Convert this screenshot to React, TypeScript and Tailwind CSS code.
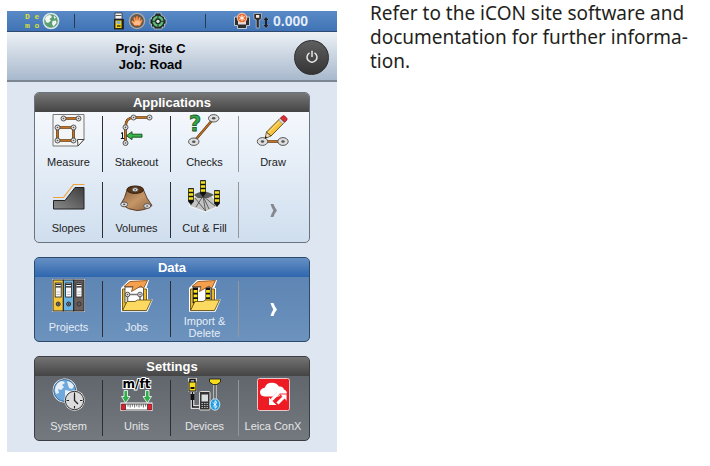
import type { ReactNode } from 'react';
import clsx from 'clsx';

/* Small parts shared by the icons */

function Node({ x, y, rx = 2.5, ry = 2.5 }: { x: number; y: number; rx?: number; ry?: number }) {
    return (
        <g>
            <ellipse cx={x} cy={y} rx={rx} ry={ry} fill="#dedede" stroke="#4a4a4a" strokeWidth="0.9" />
            <ellipse cx={x} cy={y} rx={rx / 3} ry={ry / 3} fill="#555" />
        </g>
    );
}

function Rod({ d }: { d: string }) {
    return (
        <g fill="none">
            <path d={d} stroke="#4a2c10" strokeWidth="2.600" />
            <path d={d} stroke="#c8731c" strokeWidth="1.300" />
        </g>
    );
}

function Pole({ x, y }: { x: number; y: number }) {
    return (
        <g>
            <path d={`M${x} ${y}h5v13l-2.5 3l-2.5-3z`} fill="#111" stroke="#111" strokeWidth="0.8" />
            <path d={`M${x + 0.3} ${y + 2}h4.4M${x + 0.3} ${y + 6}h4.4M${x + 0.3} ${y + 10}h4.4`} stroke="#f7e21b" strokeWidth="2.700" />
        </g>
    );
}

function Icon({ children }: { children: ReactNode }) {
    return (
        <svg viewBox="0 0 33 33" className="h-[33px] w-[33px] overflow-visible" aria-hidden="true">
            {children}
        </svg>
    );
}

const MeasureIcon = () => (
    <Icon>
        <path d="M1 .5h31v25l-6 6.500H1z" fill="#f4f5f6" stroke="#777" />
        <path d="M26 32l-.5-6.500l6.500 0z" fill="#fff" stroke="#444" />
        <Rod d="M11.500 4.500H26.500" />
        <Rod d="M5.500 13.500H21.500V26.500H5.500z" />
        <Node x={11.5} y={4.5} /><Node x={26.5} y={4.5} />
        <Node x={5.5} y={13.5} /><Node x={21.5} y={13.5} />
        <Node x={5.5} y={26.5} /><Node x={21.5} y={26.5} />
    </Icon>
);

const StakeoutIcon = () => (
    <Icon>
        <Rod d="M29.500 3.500H14C8 3.500 5.500 7 5.500 13V29" />
        <Node x={29.5} y={3.5} /><Node x={13.5} y={3.5} /><Node x={5.5} y={13.3} /><Node x={5.5} y={29} />
        <path d="M1 19.500l1.500-1v6M.8 24.500h3.200" fill="none" stroke="#111" />
        <path d="M6.500 21.700l5.500-4v2.500h10v3H12v2.500z" fill="#39b54a" stroke="#124a1a" strokeWidth="0.9" />
    </Icon>
);

const ChecksIcon = () => (
    <Icon>
        <Rod d="M25.700 4.500L6 27.500" />
        <Node x={25.7} y={4.3} rx={5.2} ry={3.7} />
        <Node x={5.8} y={27.7} rx={5.2} ry={3.7} />
        <text x="1" y="17" className="font-['DejaVu_Sans'] text-[21px] font-bold" fill="#35a84a" stroke="#145422" strokeWidth="0.8">?</text>
    </Icon>
);

const DrawIcon = () => (
    <Icon>
        <Rod d="M5 27.500H26" />
        <Node x={5.5} y={27.5} rx={5.2} ry={3.9} />
        <Node x={26} y={27.5} rx={5.2} ry={3.9} />
        <path d="M8 24.500l1.500-6.500l4.500 4z" fill="#f2dcb5" stroke="#5b4315" strokeWidth="0.8" />
        <path d="M9.500 18L23 4.500l4.300 4L14 22z" fill="#f6c33c" stroke="#5b4315" strokeWidth="0.9" />
        <path d="M11 19L24.300 5.800" stroke="#fbe395" />
        <path d="M21.500 6l1.600-1.600l4.300 4l-1.600 1.600z" fill="#ddd" stroke="#777" strokeWidth="0.6" />
        <path d="M23.500 4l2-2q1-1 2.200 0l2 2q1 1 0 2.200l-2 2z" fill="#e02b35" stroke="#7a1218" strokeWidth="0.7" />
        <path d="M8 24.500l.5-2.500l1.700 1.700z" fill="#111" />
    </Icon>
);

const SlopesIcon = () => (
    <Icon>
        <defs>
            <linearGradient id="slope" x1="0" y1="1" x2="1" y2="0">
                <stop offset="0" stopColor="#8a8a8a" />
                <stop offset="1" stopColor="#3e3e3e" />
            </linearGradient>
        </defs>
        <path d="M1.500 20.500H13L23 7.500H32V29H1.500z" fill="url(#slope)" stroke="#222" />
        <path d="M1 17.500H11.500L21.500 4.500H32.500" fill="none" stroke="#f2a23c" strokeWidth="1.200" />
    </Icon>
);

const VolumesIcon = () => (
    <Icon>
        <defs>
            <linearGradient id="heap" x1="0" y1="0" x2="1" y2="1">
                <stop offset="0" stopColor="#8a5d3a" />
                <stop offset="0.5" stopColor="#c59667" />
                <stop offset="1" stopColor="#8f6440" />
            </linearGradient>
        </defs>
        <path d="M7 10Q5 18 1 24Q8 30 17 30.500Q27 30 32 25.500Q26 18 23.500 10z" fill="url(#heap)" stroke="#4f3218" strokeWidth="0.9" />
        <ellipse cx="15.200" cy="9.700" rx="8.300" ry="3.700" fill="#5a3416" stroke="#33200f" />
        <Node x={15.2} y={9.7} rx={3} ry={2.1} />
        <Node x={4.2} y={24.4} rx={3.5} ry={2.4} />
        <Node x={27.2} y={26} rx={3.5} ry={2.4} />
    </Icon>
);

const CutFillIcon = () => (
    <Icon>
        <path d="M1 26L7 16L13 12H18L24 16L31 26L17.500 32z" fill="#c4c4c4" stroke="#fff" strokeWidth="0.8" />
        <path d="M6 15Q15 8 26 15L20 18H10z" fill="#5b5b5b" />
        <path d="M7 18L17.500 31L15 16L27 26M8 27L15 16L21 29" fill="none" stroke="#444" strokeWidth="0.8" />
        <Pole x={0.5} y={8.5} />
        <Pole x={12.5} y={0.5} />
        <Pole x={26.5} y={10.5} />
    </Icon>
);

const binders = ['#f3c83c', '#6cb4e4', '#6a5f5c'];

const ProjectsIcon = () => (
    <Icon>
        <rect x="0" y="0" width="33" height="33" fill="#e8e8e8" />
        {binders.map((color, i) => (
            <g key={color} transform={`translate(${1 + i * 10.4} 1)`}>
                <rect width="10.200" height="31" fill={color} stroke="#222" strokeWidth="0.9" />
                <rect x="2.200" y="3" width="6" height="14" fill="#f8f8f8" stroke="#222" strokeWidth="0.8" />
                <path d="M2.600 4.300h5.200M2.600 6.800h5.200" stroke="#222" strokeWidth="1.200" />
                <path d="M3.400 12h3.600M3.400 14.500h3.600" stroke="#aaa" strokeWidth="0.7" />
                <circle cx="5.200" cy="24" r="2" fill="#888" stroke="#222" strokeWidth="0.9" />
                <circle cx="5.200" cy="24" r="0.700" fill="#111" />
            </g>
        ))}
    </Icon>
);

function FolderIcon({ children }: { children: ReactNode }) {
    return (
        <Icon>
            <path d="M1 9L9 1H29L26.500 9H28V20.500H32.800L27.500 32.800H1z" fill="#fff" />
            <path d="M2.500 10H26.500V31H2.500z" fill="#e9b92b" stroke="#5c4308" strokeWidth="0.8" />
            <path d="M5 8H23.500V24H5z" fill="#fff" stroke="#333" strokeWidth="0.8" />
            {children}
            <path d="M4 7.500L10 2.500L27.500 1.500L23.500 9.500L21 7L11.500 12.500L13 7.500z" fill="#f5a04f" stroke="#7b4616" strokeWidth="0.8" />
            <path d="M2.500 31.500L7 22.500H15L17.500 21H31.500L26.500 31.500z" fill="#fcd960" stroke="#5c4308" strokeWidth="0.8" />
        </Icon>
    );
}

const JobsIcon = () => (
    <FolderIcon>
        <path d="M7.500 22V15.500H20V22" fill="none" stroke="#777" strokeWidth="1.600" />
        <Node x={7.5} y={15.5} rx={2.3} ry={2.3} />
        <Node x={20} y={15.5} rx={2.3} ry={2.3} />
    </FolderIcon>
);

const ImportIcon = () => (
    <FolderIcon>
        <path d="M7.500 8.500V24M20 8.500V24" stroke="#111" strokeWidth="5" />
        <path d="M7.500 11V24M20 11V24" stroke="#f7e21b" strokeWidth="3.800" strokeDasharray="2.800 1.700" />
    </FolderIcon>
);

const continents = 'M4 8Q6 3 11 3L13 5L10 7L12 9L9 12L6 11L7 15L4 16Q2 12 4 8zM15 3Q20 4 22 8L20 11L17 10L16 7zM13 12L18 13L19 17L15 21L13 17z';

const SystemIcon = () => (
    <Icon>
        <circle cx="12.700" cy="12.500" r="12" fill="#fff" />
        <circle cx="12.700" cy="12.500" r="11" fill="#6fa8dc" stroke="#2f5d8c" strokeWidth="0.9" />
        <path d={continents} fill="#e6f0f8" />
        <circle cx="22.500" cy="22.500" r="10.200" fill="#f7f7f7" />
        <circle cx="22.500" cy="22.500" r="9.200" fill="#dcdcdc" stroke="#333" />
        <path d="M22.500 14.500v2.500M22.500 28v2.500M14.500 22.500h2.500M28 22.500h2.500" stroke="#222" strokeWidth="1.100" />
        <path d="M22.500 17V22.500L26 26" fill="none" stroke="#222" strokeWidth="1.300" />
    </Icon>
);

const UnitsIcon = () => (
    <Icon>
        <text x="16.500" y="10" textAnchor="middle" className="font-['DejaVu_Sans'] text-[12px] font-bold" fill="#000" stroke="#fff" strokeWidth="2" paintOrder="stroke">m/ft</text>
        <rect x="0.500" y="24.500" width="32" height="8.500" fill="#fff" />
        <path d="M1.500 26H5.500v6H1.500zM27.500 26h4v6h-4z" fill="#e01f2d" stroke="#6d0d14" strokeWidth="0.7" />
        <path d="M5.500 26H27.500V32H5.500z" fill="#fff" stroke="#333" strokeWidth="0.8" />
        <path d="M8 26v2.500M10.200 26v3.500M12.400 26v2.500M14.600 26v3.500M16.800 26v2.500M19 26v3.500M21.200 26v2.500M23.400 26v3.500M25.600 26v2.500" stroke="#333" strokeWidth="0.7" />
        <path d="M4 12.500h3.500v6H10L5.700 25L1.500 18.500H4zM25.500 12.500H29v6h2.500L27.300 25L23 18.500h2.500z" fill="#2fae49" stroke="#fff" strokeWidth="0.8" />
    </Icon>
);

const DevicesIcon = () => (
    <Icon>
        <path d="M4.500 14V29H12" fill="none" stroke="#fff" strokeWidth="3.500" />
        <path d="M4.500 14V29H12" fill="none" stroke="#111" strokeWidth="1.500" />
        <rect x="2.500" y="16" width="4" height="6" fill="#111" />
        <path d="M0 0H9V14H0z" fill="#fff" opacity="0.7" />
        <path d="M2 5V1.500h5V5" fill="none" stroke="#111" strokeWidth="1.500" />
        <rect x="1" y="4" width="7" height="9" fill="#f7dc1b" stroke="#111" />
        <path d="M2.500 9h4v2h-4z" fill="#111" />
        <path d="M27 6V24" stroke="#fff" strokeWidth="3" />
        <path d="M27 6V24" stroke="#333" strokeWidth="1.400" />
        <path d="M21.500 1H32.500V4L29 6.500H25L21.500 4z" fill="#f7dc1b" stroke="#111" strokeWidth="0.8" />
        <rect x="11.500" y="13.500" width="10.500" height="18.500" rx="1" fill="#333" stroke="#ddd" />
        <rect x="13.500" y="16.500" width="6.500" height="7" fill="#d8dde0" />
        <path d="M13.500 25.500h6.500M13.500 27.500h6.500M13.500 29.500h6.500" stroke="#bbb" strokeWidth="0.9" strokeDasharray="1.500 1" />
        <ellipse cx="27" cy="26.500" rx="4.800" ry="5.700" fill="#1e9be0" stroke="#e6f5ff" strokeWidth="0.8" />
        <path d="M24.800 24.300l4.200 4.200L27 30.300V22.700l2 1.800l-4.200 4.200" fill="none" stroke="#fff" strokeWidth="0.9" />
    </Icon>
);

const ConXIcon = () => (
    <Icon>
        <rect x="0.500" y="0.500" width="32" height="32" rx="2" fill="#ed1c24" stroke="#e8c9ca" />
        <path d="M7.500 18.500Q3 18 3 14Q3.500 10.300 7.500 10Q9.500 4.500 15 4.700Q20 4.700 22 8.500Q26 8 27 11.500Q30.300 12.500 29.800 16Q29.300 18.300 26 18.500H9z" fill="#fff" />
        <path d="M14 21.500L20 15.500L22 17.500" fill="none" stroke="#ed1c24" strokeWidth="1.400" />
        <path d="M21.500 15L14.500 22" stroke="#fff" strokeWidth="3" />
        <path d="M12 19.500V27H19.500z" fill="#fff" />
        <path d="M22.500 16H30V23.500z" fill="#fff" stroke="#ed1c24" strokeWidth="0.900" />
        <path d="M27 19L20.500 25.500" stroke="#fff" strokeWidth="3" />
        <path d="M24 17.500L17 24.500" stroke="#ed1c24" strokeWidth="1.400" />
    </Icon>
);

/* Status bar icons */

const StatusGlobe = () => (
    <svg viewBox="0 0 18 18" className="h-[18px] w-[18px]" role="img" aria-label="Online">
        <circle cx="9" cy="9" r="7.600" fill="#5c9f72" stroke="#d9e4e8" strokeWidth="1.500" />
        <path d="M3 7Q4 3 8.500 3L10 5L7.500 7L9 8.500L6 11L4 10zM10.500 9L14 8.500L14.500 11L11.500 14.500L10 12zM11.500 3.500L14 5.500L12.500 7z" fill="#f2f7f3" />
    </svg>
);

const StatusTablet = () => (
    <svg viewBox="0 0 12 18" className="h-[18px] w-3" role="img" aria-label="Instrument">
        <path d="M1 7H11V17.500H1z" fill="#2a2a2a" />
        <rect x="2" y="1" width="7" height="6" fill="#f4f4f4" stroke="#333" strokeWidth="0.800" />
        <path d="M2.500 3.500h6" stroke="#555" />
        <rect x="2" y="8" width="7" height="8.500" fill="#f3d21c" stroke="#111" strokeWidth="0.800" />
        <rect x="3.800" y="9" width="3.500" height="3" fill="#7bb1dd" />
        <path d="M4 14h3.500" stroke="#111" strokeWidth="1.200" />
    </svg>
);

const StatusHand = () => (
    <svg viewBox="0 0 18 18" className="h-[18px] w-[18px]" role="img" aria-label="Manual mode">
        <circle cx="9" cy="9" r="7.600" fill="#625b55" stroke="#b4ada4" strokeWidth="1.300" />
        <path d="M6.500 13.500L3.500 9.500L4.500 8.700L6.300 10L5.700 5.500L6.800 5.200L8 8.500L8.300 4.500H9.600L9.900 8.500L11.300 5.200L12.400 5.700L11.800 9.300L13.500 7.800L14.300 8.500L12 13.500z" fill="#ffbd8b" stroke="#e66b19" strokeWidth="0.700" />
    </svg>
);

const StatusTarget = () => (
    <svg viewBox="0 0 18 18" className="h-[18px] w-[18px]" role="img" aria-label="Position">
        <path d="M6 1h6v2l3.500 2v2h1.500v5h-1.500v3H13v2H5v-2H2.500v-3H1V7h1.500V5L6 3z" fill="#202a25" stroke="#c8d6d6" strokeWidth="0.700" />
        <circle cx="9" cy="9.300" r="4.300" fill="none" stroke="#5fb877" strokeWidth="2.600" />
        <path d="M9 3V15.500M3 9.300H15" stroke="#20352a" />
        <circle cx="9" cy="9.300" r="1.600" fill="#e3f1e6" />
    </svg>
);

const StatusLaser = () => (
    <svg viewBox="0 0 16 18" className="h-[18px] w-4" role="img" aria-label="Laser off">
        <path d="M.5 5H15.500V13.500H12.500V16.500H3.500V13.500H.5z" fill="#2e2e2e" stroke="#cfd5dc" strokeWidth="0.900" />
        <path d="M4 8H12V12.500H4z" fill="#dedede" />
        <circle cx="8" cy="6" r="4.800" fill="#ee6b2d" stroke="#f6ddcf" strokeWidth="0.900" />
        <path d="M8 3v6M5.400 4.500l5.200 3M10.600 4.500l-5.200 3" stroke="#fff" />
    </svg>
);

const StatusPole = () => (
    <svg viewBox="0 0 17 18" className="h-[18px] w-[17px]" role="img" aria-label="Pole height">
        <path d="M.8 1.500H8.500V6.500L6.300 8V16H3.200V8L.8 6.500z" fill="#2e2e2e" stroke="#c3cbd4" strokeWidth="0.700" />
        <path d="M3 3h3.300v2.800H3z" fill="#f4e7df" />
        <path d="M13 4.500l3.300 4h-6.600zM13 16.500l3.300-4h-6.600z" fill="#1a222e" stroke="#c3cbd4" strokeWidth="0.400" />
        <path d="M13 8V13" stroke="#1a222e" strokeWidth="2" />
    </svg>
);

type Tone = 'light' | 'blue' | 'gray';

type Item = {
    label: string;
    icon?: ReactNode;
};

const applications: Item[] = [
    { label: 'Measure', icon: <MeasureIcon /> },
    { label: 'Stakeout', icon: <StakeoutIcon /> },
    { label: 'Checks', icon: <ChecksIcon /> },
    { label: 'Draw', icon: <DrawIcon /> },
    { label: 'Slopes', icon: <SlopesIcon /> },
    { label: 'Volumes', icon: <VolumesIcon /> },
    { label: 'Cut & Fill', icon: <CutFillIcon /> },
    { label: 'More applications' }
];

const data: Item[] = [
    { label: 'Projects', icon: <ProjectsIcon /> },
    { label: 'Jobs', icon: <JobsIcon /> },
    { label: 'Import & Delete', icon: <ImportIcon /> },
    { label: 'More data' }
];

const settings: Item[] = [
    { label: 'System', icon: <SystemIcon /> },
    { label: 'Units', icon: <UnitsIcon /> },
    { label: 'Devices', icon: <DevicesIcon /> },
    { label: 'Leica ConX', icon: <ConXIcon /> }
];

const panelTone: Record<Tone, string> = {
    light: 'border-[#6b747c] bg-linear-to-b from-[#fafcff] to-[#cfdeee] text-[#222]',
    blue: 'border-[#2c4a6c] bg-linear-to-b from-[#5a82b1] to-[#6c92bd] text-[#e4edf7]',
    gray: 'border-[#3a3d42] bg-linear-to-b from-[#5c6168] to-[#73797f] text-[#e6e6e6]'
};

const titleTone: Record<Tone, string> = {
    light: 'from-[#777] to-[#454545]',
    blue: 'from-[#6690c4] to-[#2e66ae]',
    gray: 'from-[#747474] to-[#444]'
};

function Panel({ title, tone, items }: { title: string; tone: Tone; items: Item[] }) {
    return (
        <section className={clsx('overflow-hidden rounded-[5px] border', panelTone[tone])}>
            <h2 className={clsx('bg-linear-to-b text-center text-[13px] leading-[19px] font-bold text-white', titleTone[tone])}>
                {title}
            </h2>
            <ul className="grid grid-cols-4 gap-y-0.5 pr-0.5">
                {items.map((item, idx) => (
                    <li key={item.label} className="flex h-16 items-center">
                        {item.icon ? (
                            <button className="flex h-full min-w-0 flex-1 flex-col items-center gap-[3px] pt-0.5 text-[11px] leading-3">
                                {item.icon}
                                <span className={clsx('flex h-6 items-center text-center', item.label.length > 12 ? 'w-12' : 'whitespace-nowrap')}>
                                    {item.label}
                                </span>
                            </button>
                        ) : (
                            <button aria-label={item.label} className={clsx('flex h-full flex-1 items-center justify-center', tone === 'light' ? 'text-[#85898e]' : 'text-white')}>
                                <svg viewBox="0 0 7 13" className="h-[13px] w-[7px]" aria-hidden="true">
                                    <path d="M.5 0H3.500Q4.500 3.500 7 6.500Q4.500 9.500 3.500 13H.5Q1.500 9.500 3.300 6.500Q1.500 3.500 .5 0z" fill="currentColor" />
                                </svg>
                            </button>
                        )}
                        {idx % 4 !== 3 && (
                            <span className={clsx('h-14 w-px', idx % 4 === 2 ? 'bg-[#93979c]' : 'bg-[#2b2f35]')} />
                        )}
                    </li>
                ))}
            </ul>
        </section>
    );
}

export default function App() {
    return (
        <main className="flex min-h-screen items-start bg-white pl-[7px] font-['Liberation_Sans',sans-serif]">
            <div className="mt-[11px] w-[330px] shrink-0 bg-[#dee6f1]">
                {/* Status bar */}
                <div className="flex h-[21px] items-center border-b border-[#2e4a70] bg-linear-to-b from-[#5a8ac6] to-[#3f73b5]">
                    <div className="flex w-[67px] items-center gap-[3px] pl-[18px]">
                        <div className="font-['Liberation_Mono',monospace] text-[8px] leading-[9px] font-bold text-[#dde22a]">
                            <div>D e</div>
                            <div>m o</div>
                        </div>
                        <StatusGlobe />
                    </div>
                    <span className="h-3.5 w-px bg-[#27384f]" />
                    <div className="flex w-[130px] items-center justify-center gap-[3px]">
                        <StatusTablet />
                        <StatusHand />
                        <StatusTarget />
                    </div>
                    <span className="h-3.5 w-px bg-[#27384f]" />
                    <div className="flex flex-1 items-center gap-[3px] pl-7">
                        <StatusLaser />
                        <StatusPole />
                        <span className="text-[14px] leading-4 font-bold text-[#e4edf8]">0.000</span>
                    </div>
                </div>

                {/* Project header */}
                <header className="flex h-[50px] items-center border-b-2 border-[#7c8793] bg-linear-to-b from-[#edf1f5] to-[#a8b9cd] pt-0.5 pr-2">
                    <h1 className="flex-1 text-center text-[13px] leading-4 font-bold text-black">
                        Proj: Site C<br />Job: Road
                    </h1>
                    <button aria-label="Power" className="flex h-[35px] w-[35px] items-center justify-center rounded-full border border-[#2c2c2c] bg-linear-to-b from-[#5f5f5f] to-[#353535]">
                        <svg viewBox="0 0 14 14" className="h-3.5 w-3.5" fill="none" stroke="#e8e8e8" strokeWidth="1.500" aria-hidden="true">
                            <path d="M4.500 2.800A5 5 0 1 0 9.500 2.800M7 .8V7" />
                        </svg>
                    </button>
                </header>

                <div className="flex flex-col gap-3.5 px-[27px] pt-2.5 pb-[11px]">
                    <Panel title="Applications" tone="light" items={applications} />
                    <Panel title="Data" tone="blue" items={data} />
                    <Panel title="Settings" tone="gray" items={settings} />
                </div>
            </div>

            <p className="mt-px ml-[33px] flex-1 font-['Noto_Sans',sans-serif] text-[19px] leading-6 text-[#231f20]">
                Refer to the iCON site software and<br />documentation for further informa-<br />tion.
            </p>
        </main>
    );
}
